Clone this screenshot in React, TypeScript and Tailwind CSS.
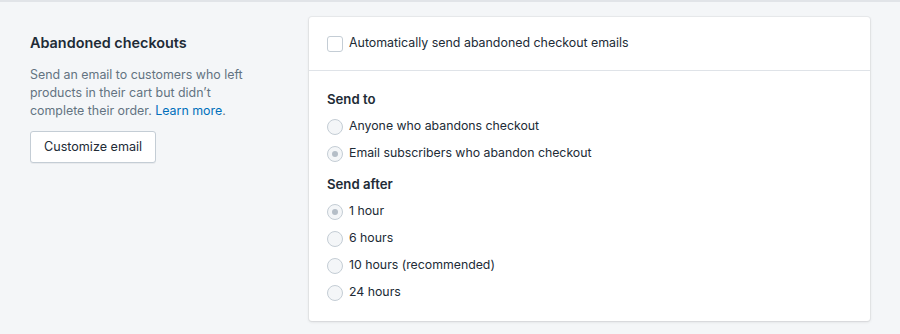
import React from 'react'

function Radio({ label, checked }: { label: string; checked?: boolean }) {
  return (
    <label className="flex h-[27px] items-center">
      <span className="flex h-[16px] w-[16px] items-center justify-center rounded-full border border-[#c4cdd5] bg-[#f4f6f8]">
        {checked && <span className="h-[6px] w-[6px] rounded-full bg-[#b5bec7]" />}
      </span>
      <span className="ml-[6px] text-[12.3px] text-[#212b36]">{label}</span>
    </label>
  )
}

export default function App() {
  return (
    <div className="min-h-[334px] border-t-2 border-[#e1e4e8] bg-[#f4f6f8] font-['Inter',sans-serif] antialiased">
      <div className="flex pt-[15px]">
        {/* Description column */}
        <div className="w-[309px] shrink-0 pl-[30px] pr-[30px] pt-[16px]">
          <h2 className="text-[14.4px] font-semibold leading-[20px] text-[#212b36]">Abandoned checkouts</h2>
          <p className="mt-[13px] w-[232px] text-[12.4px] leading-[18px] text-[#637381]">
            Send an email to customers who left products in their cart but didn’t complete their order.{' '}
            <a href="#" className="text-[#006fbb]">Learn more</a>.
          </p>
          <button className="mt-[11px] h-[32px] rounded-[3px] border border-[#c4cdd5] bg-white px-[13px] text-[12.6px] text-[#212b36] shadow-[0_1px_0_rgba(22,29,37,0.05)]">
            Customize email
          </button>
        </div>

        {/* Settings card */}
        <div className="w-[561px] rounded-[3px] bg-white shadow-[0_0_0_1px_rgba(63,63,68,0.05),0_1px_3px_0_rgba(63,63,68,0.15)]">
          <div className="flex h-[54px] items-center border-b border-[#dfe3e8] px-[18px]">
            <span className="h-[16px] w-[16px] rounded-[3px] border border-[#c4cdd5] bg-white" />
            <span className="ml-[6px] text-[12.4px] text-[#212b36]">Automatically send abandoned checkout emails</span>
          </div>
          <div className="px-[18px] pb-[15px] pt-[17px]">
            <div className="h-[22px] text-[13.2px] font-semibold leading-[22px] text-[#212b36]">Send to</div>
            <div className="mt-[3px]">
              <Radio label="Anyone who abandons checkout" />
              <Radio label="Email subscribers who abandon checkout" checked />
            </div>
            <div className="mt-[6px] h-[22px] text-[13.2px] font-semibold leading-[22px] text-[#212b36]">Send after</div>
            <div className="mt-[3px]">
              <Radio label="1 hour" checked />
              <Radio label="6 hours" />
              <Radio label="10 hours (recommended)" />
              <Radio label="24 hours" />
            </div>
          </div>
        </div>
      </div>
    </div>
  )
}
